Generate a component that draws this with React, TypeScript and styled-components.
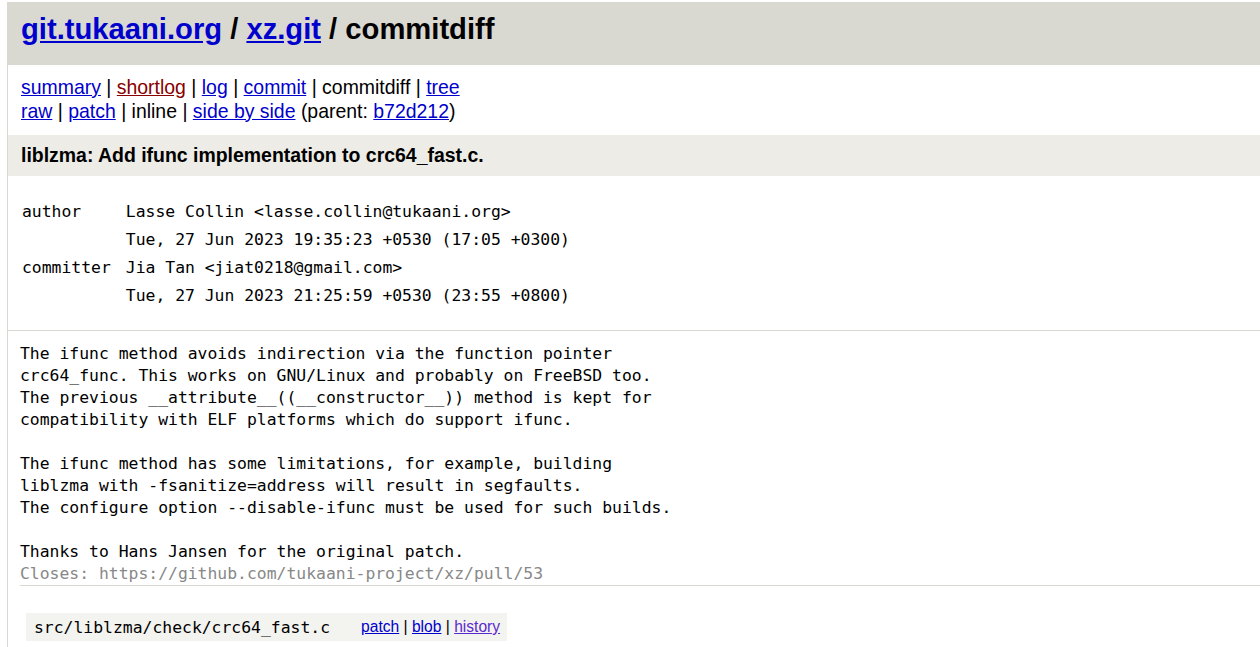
import React from 'react';
import styled, { createGlobalStyle } from 'styled-components';

const GlobalStyle = createGlobalStyle`
  html, body {
    overflow: hidden;
  }
  body {
    margin: 2px 0 0 7px;
    background: #ffffff;
    color: #000000;
    font-family: 'Liberation Sans', Arial, sans-serif;
    font-size: 19.45px;
  }
`;

const mono = `'DejaVu Sans Mono', 'Liberation Mono', monospace`;

const Page = styled.div`
  border-left: 1px solid #d9d8d1;
  min-height: 700px;
`;

const Link = styled.a<{ $tone?: 'visited' | 'old' }>`
  color: ${(p) => (p.$tone === 'visited' ? '#880000' : p.$tone === 'old' ? '#5a2ad0' : '#0000cc')};
  text-decoration: underline;
  cursor: pointer;
`;

const Header = styled.div`
  box-sizing: border-box;
  height: 63px;
  padding: 11px 13px 0;
  background: #d9d8d1;
  font-size: 29.2px;
  font-weight: bold;
  line-height: 33px;
  white-space: nowrap;
`;

const Nav = styled.div`
  padding: 11px 13px 12px;
  line-height: 23.5px;
`;

const NavLine = styled.div`
  white-space: nowrap;
`;

const TitleBar = styled.div`
  padding: 9px 13px 8.5px;
  background: #edece6;
  font-weight: bold;
  line-height: 23.5px;
`;

const AuthorBlock = styled.div`
  padding: 21px 0 21px 14px;
  border-bottom: 1px solid #d9d8d1;
`;

const AuthorGrid = styled.div`
  display: grid;
  grid-template-columns: auto 1fr;
  grid-auto-rows: 28px;
  column-gap: 15px;
  align-items: center;
  font-family: ${mono};
  font-size: 16.4px;
`;

const Body = styled.div`
  padding: 12px 0 0 12px;
`;

const Message = styled.div`
  font-family: ${mono};
  font-size: 16.4px;
  line-height: 22px;
  white-space: pre;
`;

const MsgLine = styled.div<{ $muted?: boolean }>`
  min-height: 22px;
  color: ${(p) => (p.$muted ? '#888888' : '#000000')};
`;

const ListHead = styled.div`
  border-top: 1px solid #d9d8d1;
  padding-top: 27px;
`;

const FileRow = styled.div`
  display: inline-flex;
  align-items: center;
  height: 28px;
  margin-left: 6px;
  padding: 0 7px 0 8px;
  background: #f3f3ef;
  gap: 31px;
`;

const FilePath = styled.span`
  font-family: ${mono};
  font-size: 16.4px;
`;

const FileLinks = styled.span`
  font-size: 15.6px;
`;

const messageLines = [
  'The ifunc method avoids indirection via the function pointer',
  'crc64_func. This works on GNU/Linux and probably on FreeBSD too.',
  'The previous __attribute__((__constructor__)) method is kept for',
  'compatibility with ELF platforms which do support ifunc.',
  '',
  'The ifunc method has some limitations, for example, building',
  'liblzma with -fsanitize=address will result in segfaults.',
  'The configure option --disable-ifunc must be used for such builds.',
  '',
  'Thanks to Hans Jansen for the original patch.',
];

const people = [
  ['author', 'Lasse Collin <lasse.collin@tukaani.org>'],
  ['', 'Tue, 27 Jun 2023 19:35:23 +0530 (17:05 +0300)'],
  ['committer', 'Jia Tan <jiat0218@gmail.com>'],
  ['', 'Tue, 27 Jun 2023 21:25:59 +0530 (23:55 +0800)'],
];

const App = () => {
  return (
    <>
      <GlobalStyle />
      <Page>
        <Header>
          <Link>git.tukaani.org</Link> / <Link>xz.git</Link> / commitdiff
        </Header>
        <Nav>
          <NavLine>
            <Link>summary</Link> | <Link $tone='visited'>shortlog</Link> | <Link>log</Link> |{' '}
            <Link>commit</Link> | commitdiff | <Link>tree</Link>
          </NavLine>
          <NavLine>
            <Link>raw</Link> | <Link>patch</Link> | inline | <Link>side by side</Link> (parent:{' '}
            <Link>b72d212</Link>)
          </NavLine>
        </Nav>
        <TitleBar>liblzma: Add ifunc implementation to crc64_fast.c.</TitleBar>
        <AuthorBlock>
          <AuthorGrid>
            {people.map(([label, value], i) => (
              <React.Fragment key={i}>
                <span>{label}</span>
                <span>{value}</span>
              </React.Fragment>
            ))}
          </AuthorGrid>
        </AuthorBlock>
        <Body>
          <Message>
            {messageLines.map((line, i) => (
              <MsgLine key={i}>{line}</MsgLine>
            ))}
            <MsgLine $muted>Closes: https://github.com/tukaani-project/xz/pull/53</MsgLine>
          </Message>
          <ListHead />
          <FileRow>
            <FilePath>src/liblzma/check/crc64_fast.c</FilePath>
            <FileLinks>
              <Link>patch</Link> | <Link>blob</Link> | <Link $tone='old'>history</Link>
            </FileLinks>
          </FileRow>
        </Body>
      </Page>
    </>
  );
};

export default App;
